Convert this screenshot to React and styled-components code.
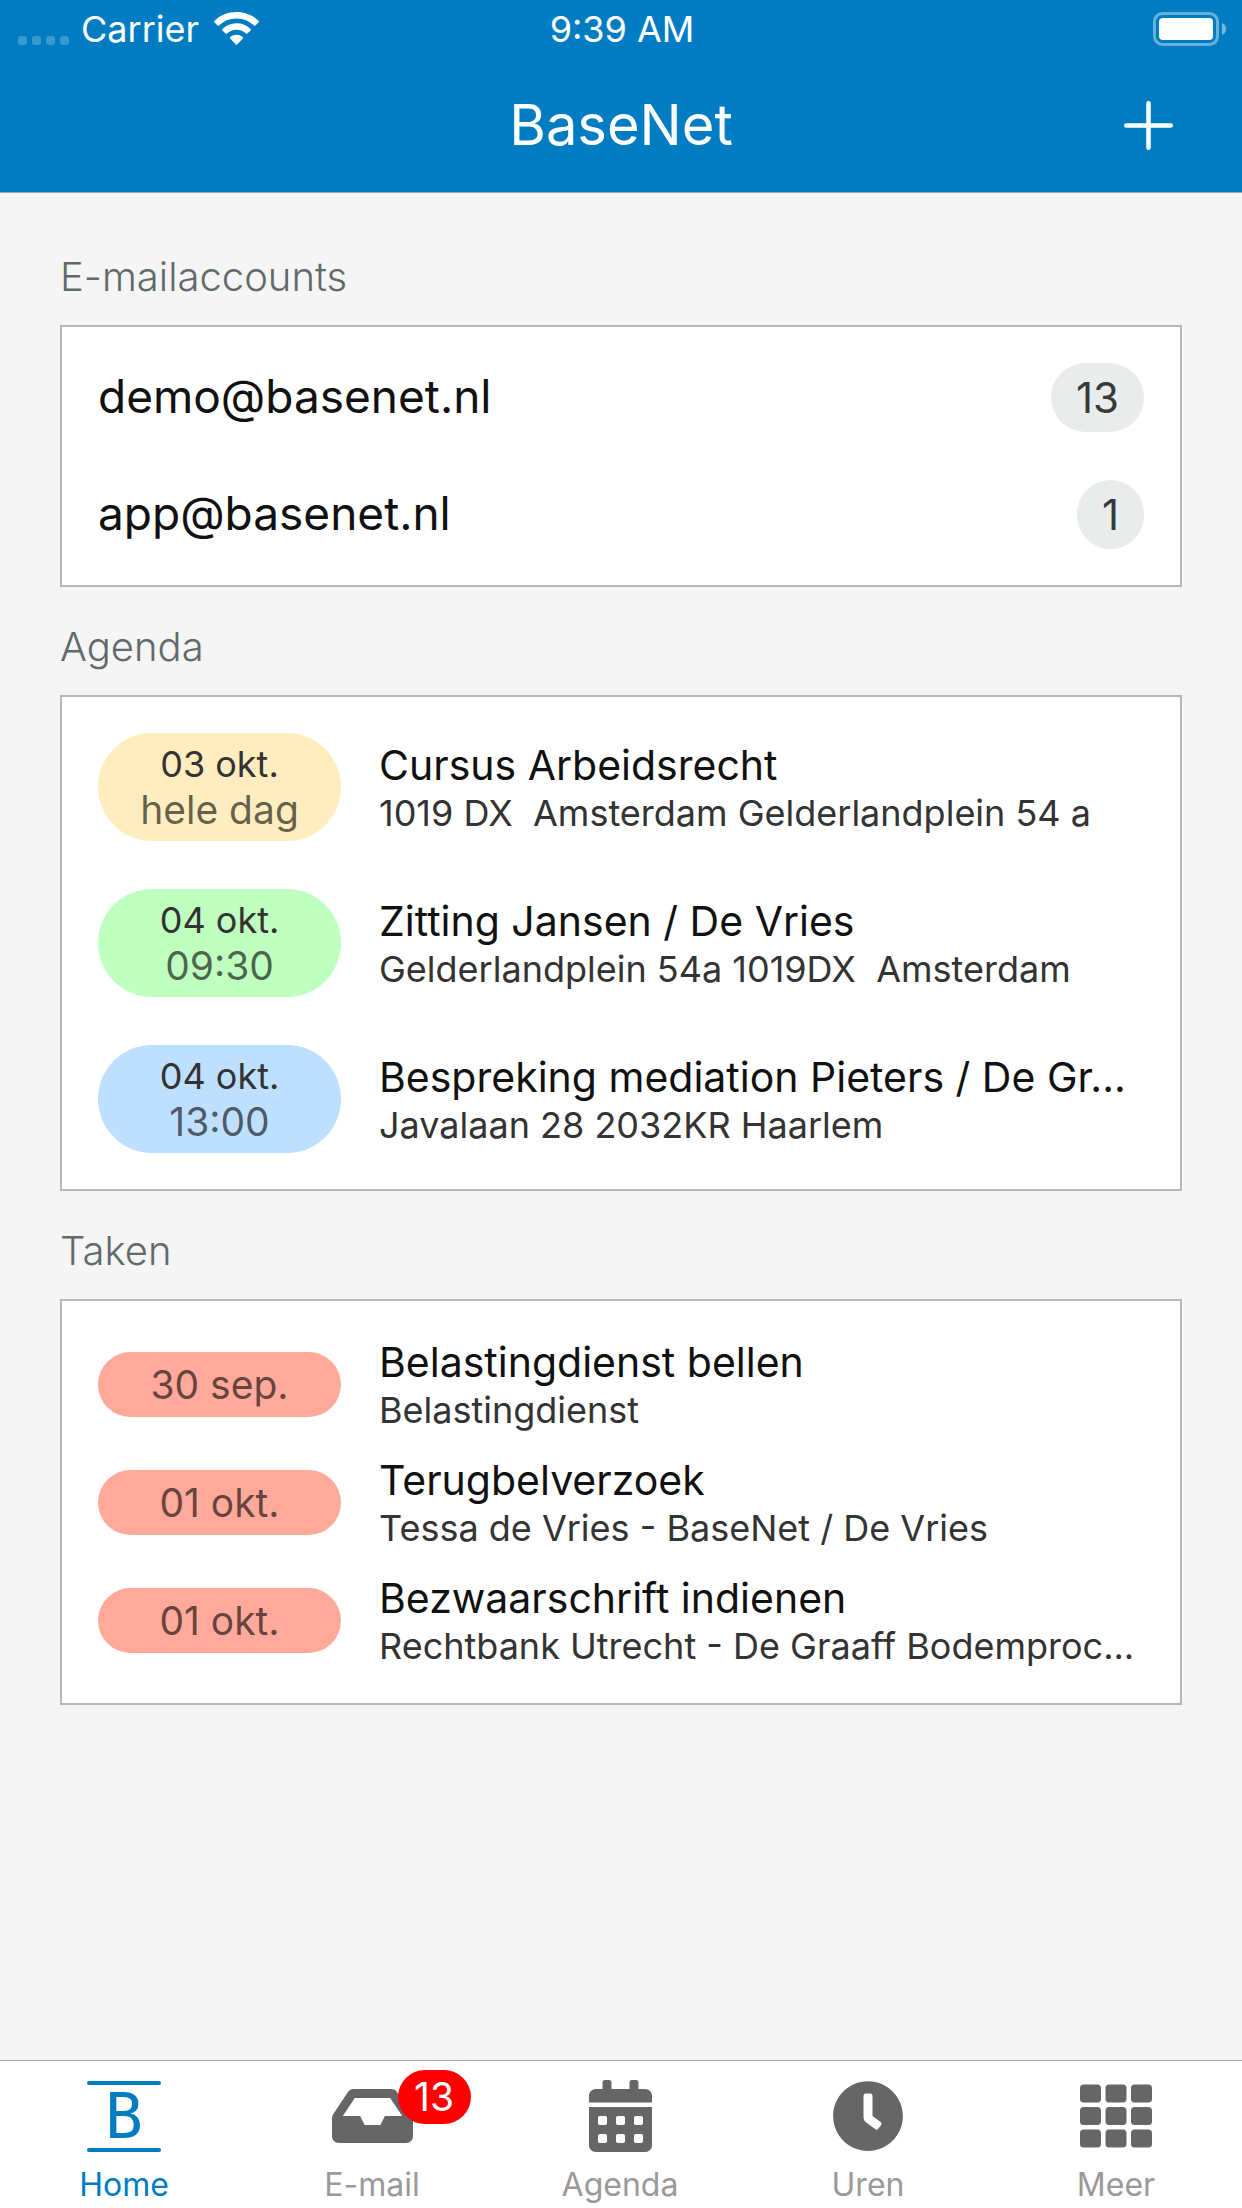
import React from "react";
import styled, { createGlobalStyle } from "styled-components";
import { FaInbox, FaCalendarAlt, FaClock, FaTh } from "react-icons/fa";

const blue = "#007dc2";
const grey = "#666666";

const GlobalStyle = createGlobalStyle`
  *, *::before, *::after { box-sizing: border-box; }
  body {
    margin: 0;
    background: #f5f5f5;
    font-family: Inter, "Liberation Sans", sans-serif;
    color: #111111;
  }
  a { color: inherit; text-decoration: none; }
  ul { list-style: none; margin: 0; padding: 0; }
`;

const Screen = styled.div`
  min-height: 100vh;
  display: flex;
  flex-direction: column;
`;

const Header = styled.header`
  background: ${blue};
  color: #ffffff;
  border-bottom: 1px solid #a7aaab;
`;

const StatusBar = styled.div`
  display: grid;
  grid-template-columns: 1fr auto 1fr;
  align-items: center;
  height: 58px;
  padding: 0 16px 0 18px;
  font-size: 36px;
  line-height: 40px;
`;

const StatusLeft = styled.div`
  display: flex;
  align-items: center;
`;

const StatusRight = styled.div`
  display: flex;
  justify-content: flex-end;
`;

const SignalDots = styled.svg`
  width: 51px;
  height: 33px;
  margin-right: 12px;
`;

const WifiIcon = styled.svg`
  width: 45px;
  height: 34px;
  margin-left: 15px;
`;

const BatteryIcon = styled.svg`
  width: 73px;
  height: 34px;
`;

const TitleBar = styled.div`
  display: grid;
  grid-template-columns: 1fr auto 1fr;
  align-items: center;
  height: 134px;
  padding: 0 69px;
`;

const Title = styled.h1`
  grid-column: 2;
  margin: 0;
  font-size: 56px;
  line-height: 72px;
  font-weight: 400;
`;

const AddButton = styled.button`
  grid-column: 3;
  justify-self: end;
  display: flex;
  padding: 0;
  border: 0;
  background: none;
  color: inherit;
  cursor: pointer;
`;

const Main = styled.main`
  flex: 1;
  padding: 24px 60px 60px;
`;

const Heading = styled.h2`
  margin: 0;
  padding: 36px 0 24px;
  font-size: 40px;
  line-height: 48px;
  font-weight: 300;
  color: #616a6b;
`;

const Card = styled.ul`
  display: flex;
  flex-direction: column;
  gap: ${(p) => p.$gap}px;
  padding: ${(p) => p.$pad}px 36px;
  background: #ffffff;
  border: 2px solid #b3b9b9;
`;

const AccountRow = styled.a`
  display: flex;
  align-items: flex-start;
  justify-content: space-between;
  font-size: 46px;
  line-height: 66px;
`;

const CountPill = styled.span`
  padding: 0 25px;
  border-radius: 35px;
  background: #eaeceb;
  color: #333b3c;
  font-size: 42px;
  line-height: 69px;
`;

const EntryRow = styled.a`
  display: flex;
  align-items: center;
  gap: 38px;
  height: ${(p) => p.$height}px;
`;

const DatePill = styled.span`
  flex: none;
  display: flex;
  flex-direction: column;
  width: 243px;
  padding: ${(p) => p.$pad}px 0;
  border-radius: 54px;
  background: ${(p) => p.$color};
  color: rgba(0, 0, 0, 0.62);
  font-size: 39px;
  line-height: 45px;
  text-align: center;
`;

const DateLine = styled.span`
  font-size: 36px;
  color: #333333;
`;

const EntryText = styled.span`
  min-width: 0;
  display: flex;
  flex-direction: column;
  white-space: pre;
`;

const EntryTitle = styled.span`
  font-size: 41px;
  line-height: 52px;
`;

const EntrySub = styled.span`
  font-size: 36px;
  line-height: 44px;
  color: #333333;
`;

const TabBar = styled.nav`
  position: sticky;
  bottom: 0;
  display: grid;
  grid-template-columns: repeat(5, 1fr);
  padding-right: 2px;
  background: #ffffff;
  border-top: 1px solid #a7aaab;
`;

const Tab = styled.a`
  display: flex;
  flex-direction: column;
  align-items: center;
  gap: 13px;
  padding: 19px 0 3px;
  font-size: 32px;
  line-height: 40px;
  color: ${(p) => (p.$active ? blue : "#999999")};
`;

const IconBox = styled.span`
  position: relative;
  display: flex;
  color: ${(p) => (p.$active ? blue : grey)};
  font-size: 72px;
`;

const TabBadge = styled.span`
  position: absolute;
  top: -10px;
  left: 66px;
  width: 73px;
  border-radius: 27px;
  background: #ff0000;
  color: #ffffff;
  font-size: 39px;
  line-height: 54px;
  text-align: center;
`;

const InboxIcon = styled(FaInbox)`
  width: 81px;
`;

const CalendarIcon = styled(FaCalendarAlt)`
  width: 63px;
`;

const LogoMark = styled.span`
  display: flex;
  flex-direction: column;
  justify-content: space-between;
  width: 74px;
  height: 72px;
  padding-top: 1px;
  font-family: "DejaVu Sans Mono", monospace;
  font-size: 63px;
  line-height: 63px;
  text-align: center;

  &::before,
  &::after {
    content: "";
    height: 4px;
    border-radius: 2px;
    background: currentColor;
  }
`;

const accounts = [
  { name: "demo@basenet.nl", count: 13 },
  { name: "app@basenet.nl", count: 1 },
];

const agenda = [
  { date: "03 okt.", time: "hele dag", color: "#ffedbf", title: "Cursus Arbeidsrecht", sub: "1019 DX  Amsterdam Gelderlandplein 54 a" },
  { date: "04 okt.", time: "09:30", color: "#bfffbf", title: "Zitting Jansen / De Vries", sub: "Gelderlandplein 54a 1019DX  Amsterdam" },
  { date: "04 okt.", time: "13:00", color: "#bfdfff", title: "Bespreking mediation Pieters / De Gr...", sub: "Javalaan 28 2032KR Haarlem" },
];

const tasks = [
  { date: "30 sep.", title: "Belastingdienst bellen", sub: "Belastingdienst" },
  { date: "01 okt.", title: "Terugbelverzoek", sub: "Tessa de Vries - BaseNet / De Vries" },
  { date: "01 okt.", title: "Bezwaarschrift indienen", sub: "Rechtbank Utrecht - De Graaff Bodemproc..." },
];

export default function App() {
  return (
    <Screen>
      <GlobalStyle />
      <Header>
        <StatusBar>
          <StatusLeft>
            <SignalDots viewBox="0 0 51 33" fill="#ffffff" fillOpacity="0.22" aria-hidden="true">
              {[0, 14, 28, 42].map((x) => (
                <rect key={x} x={x} y="23" width="9" height="9" rx="3" />
              ))}
            </SignalDots>
            Carrier
            <WifiIcon viewBox="0 0 45 34" fill="#ffffff" aria-hidden="true">
              <path d="M22.500 0C14 0 6.200 3.200 0.400 8.900a1 1 0 0 0 0 1.400l3.100 3.200a1 1 0 0 0 1.400 0A25 25 0 0 1 22.500 6.400a25 25 0 0 1 17.600 7.100 1 1 0 0 0 1.400 0l3.100-3.200a1 1 0 0 0 0-1.400C38.800 3.200 31 0 22.500 0z" />
              <path d="M22.500 11.300c-5.400 0-10.400 2.100-14.100 5.600a1 1 0 0 0 0 1.500l3.200 3.200a1 1 0 0 0 1.400 0 13.600 13.600 0 0 1 19 0 1 1 0 0 0 1.400 0l3.200-3.200a1 1 0 0 0 0-1.500 20.400 20.400 0 0 0-14.100-5.600z" />
              <path d="M22.500 22.700c-2.400 0-4.600.9-6.300 2.300a1 1 0 0 0 0 1.500l5.600 6a1 1 0 0 0 1.400 0l5.600-6a1 1 0 0 0 0-1.500 9.700 9.700 0 0 0-6.300-2.300z" />
            </WifiIcon>
          </StatusLeft>
          <span>9:39 AM</span>
          <StatusRight>
            <BatteryIcon viewBox="0 0 73 34" aria-hidden="true">
              <rect x="1.500" y="1.500" width="63" height="31" rx="8" fill="none" stroke="#ffffff" strokeOpacity="0.4" strokeWidth="3" />
              <rect x="6" y="6" width="54" height="22" rx="4" fill="#ffffff" />
              <path d="M69 11c2.600 1 4 3.300 4 6s-1.400 5-4 6z" fill="#ffffff" fillOpacity="0.45" />
            </BatteryIcon>
          </StatusRight>
        </StatusBar>
        <TitleBar>
          <Title>BaseNet</Title>
          <AddButton type="button" aria-label="Toevoegen">
            <svg width="49" height="49" viewBox="0 0 49 49" stroke="#ffffff" strokeWidth="4.500" strokeLinecap="round" aria-hidden="true">
              <path d="M24.500 2.250v44.500M2.250 24.500h44.500" />
            </svg>
          </AddButton>
        </TitleBar>
      </Header>

      <Main>
        <section>
          <Heading>E-mailaccounts</Heading>
          <Card $gap={48} $pad={36}>
            {accounts.map((a) => (
              <li key={a.name}>
                <AccountRow href="#email">
                  {a.name}
                  <CountPill>{a.count}</CountPill>
                </AccountRow>
              </li>
            ))}
          </Card>
        </section>
        <section>
          <Heading>Agenda</Heading>
          <Card $gap={48} $pad={36}>
            {agenda.map((e) => (
              <li key={e.title}>
                <EntryRow href="#agenda" $height={108}>
                  <DatePill $color={e.color} $pad={9}>
                    <DateLine>{e.date}</DateLine>
                    {e.time}
                  </DatePill>
                  <EntryText>
                    <EntryTitle>{e.title}</EntryTitle>
                    <EntrySub>{e.sub}</EntrySub>
                  </EntryText>
                </EntryRow>
              </li>
            ))}
          </Card>
        </section>
        <section>
          <Heading>Taken</Heading>
          <Card $gap={0} $pad={24}>
            {tasks.map((t) => (
              <li key={t.title}>
                <EntryRow href="#taken" $height={118}>
                  <DatePill $color="#ffa99b" $pad={10}>{t.date}</DatePill>
                  <EntryText>
                    <EntryTitle>{t.title}</EntryTitle>
                    <EntrySub>{t.sub}</EntrySub>
                  </EntryText>
                </EntryRow>
              </li>
            ))}
          </Card>
        </section>
      </Main>

      <TabBar>
        <Tab href="#home" $active aria-current="page">
          <IconBox $active>
            <LogoMark>B</LogoMark>
          </IconBox>
          Home
        </Tab>
        <Tab href="#email">
          <IconBox>
            <InboxIcon />
            <TabBadge>13</TabBadge>
          </IconBox>
          E-mail
        </Tab>
        <Tab href="#agenda">
          <IconBox><CalendarIcon /></IconBox>
          Agenda
        </Tab>
        <Tab href="#uren">
          <IconBox><FaClock /></IconBox>
          Uren
        </Tab>
        <Tab href="#meer">
          <IconBox><FaTh /></IconBox>
          Meer
        </Tab>
      </TabBar>
    </Screen>
  );
}
